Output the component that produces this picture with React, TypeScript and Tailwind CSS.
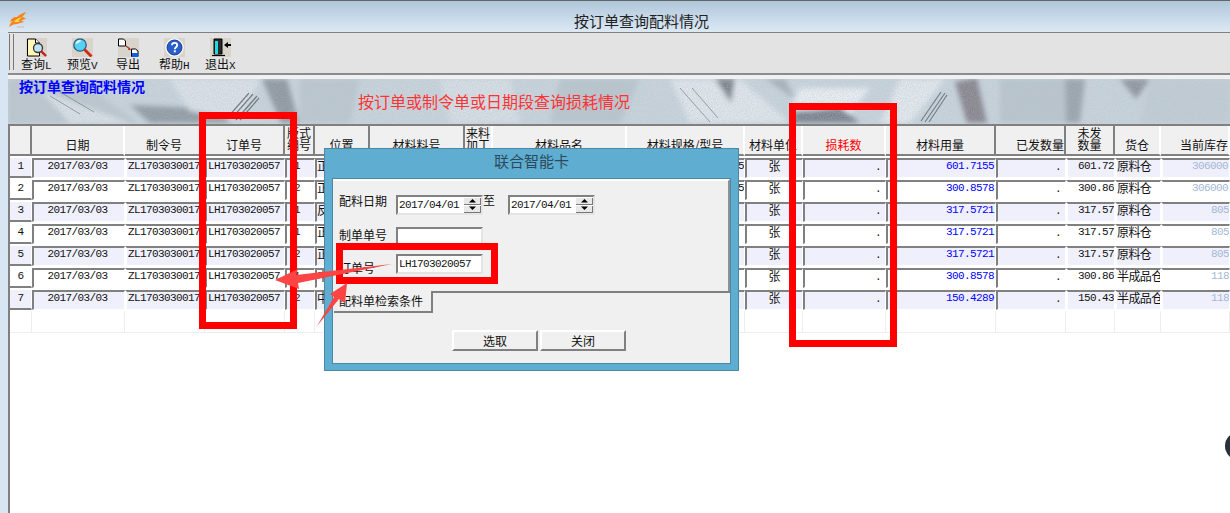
const COLS = "grid grid-cols-[22px_93px_80px_80px_30px_55px_95px_28px_134px_118px_58px_83px_110px_70px_49px_46px_69px]";
const MONO = "font-['Liberation_Mono',monospace] text-[11px] tracking-[-0.6px]";

type H = { t: string; t2?: string; dark?: boolean; align?: string; red?: boolean };
const headers: H[] = [
  { t: "" },
  { t: "日期", dark: true },
  { t: "制令号" },
  { t: "订单号" },
  { t: "版式", t2: "编号", dark: true },
  { t: "位置", dark: true },
  { t: "材料料号", dark: true },
  { t: "来料", t2: "加工", dark: true },
  { t: "材料品名" },
  { t: "材料规格/型号" },
  { t: "材料单位" },
  { t: "损耗数", red: true },
  { t: "材料用量" },
  { t: "已发数量", align: "justify-end", dark: true },
  { t: "未发", t2: "数量", dark: true },
  { t: "货仓", dark: true },
  { t: "当前库存", align: "justify-end" },
];

const rows = [
  { v: "1", p: "正", spec: "285", use: "601.7155", rest: "601.72", store: "原料仓", stock: "306000", wide: true },
  { v: "2", p: "正", spec: "285", use: "300.8578", rest: "300.86", store: "原料仓", stock: "306000", wide: true },
  { v: "1", p: "反", spec: "", use: "317.5721", rest: "317.57", store: "原料仓", stock: "8059.1", wide: false },
  { v: "1", p: "正", spec: "", use: "317.5721", rest: "317.57", store: "原料仓", stock: "8059.1", wide: false },
  { v: "2", p: "正", spec: "", use: "317.5721", rest: "317.57", store: "原料仓", stock: "8059.1", wide: false },
  { v: "1", p: "中", spec: "", use: "300.8578", rest: "300.86", store: "半成品仓", stock: "118", wide: false },
  { v: "2", p: "中", spec: "", use: "150.4289", rest: "150.43", store: "半成品仓", stock: "118", wide: false },
];

function Cell({ children, bg, dark, cls = "" }: { children?: React.ReactNode; bg: string; dark?: boolean; cls?: string }) {
  return (
    <div className={`h-[20px] flex overflow-hidden whitespace-nowrap leading-[12px] border-t-2 border-t-[#808080] border-b border-b-white border-r border-r-white border-l-2 ${dark ? "border-l-[#808080]" : "border-l-white"} ${bg} ${cls}`}>
      {children}
    </div>
  );
}

function Row({ i, r }: { i: number; r: (typeof rows)[number] }) {
  const bg = i % 2 === 0 ? "bg-[#f0f0fc]" : "bg-white";
  return (
    <div className={`${COLS} pt-px h-[22px]`}>
      <div className={`h-[20px] flex justify-center pt-[2px] leading-[12px] ${MONO} border-b-2 border-b-[#808080] border-r border-r-white ${bg}`}>{i + 1}</div>
      <Cell bg={bg} dark cls={`justify-center pr-[3px] ${MONO}`}>2017/03/03</Cell>
      <Cell bg={bg} cls={`pl-[1px] ${MONO}`}>ZL1703030017</Cell>
      <Cell bg={bg} dark cls={`pl-[1px] ${MONO}`}>LH1703020057</Cell>
      <Cell bg={bg} dark cls={`pl-[7px] ${MONO}`}>{r.v}</Cell>
      <Cell bg={bg} dark>{r.p}</Cell>
      <Cell bg={bg} />
      <Cell bg={bg} />
      <Cell bg={bg} />
      <Cell bg={bg} cls={`justify-end ${MONO}`}>{r.spec}</Cell>
      <Cell bg={bg} dark cls="justify-center">张</Cell>
      <Cell bg={bg} dark cls={`justify-end pr-[4px] pt-[1px] ${MONO}`}>.</Cell>
      <Cell bg={bg} dark cls={`justify-end pr-[1px] text-[#0000ff] ${MONO}`}>{r.use}</Cell>
      <Cell bg={bg} dark cls={`justify-end pr-[4px] pt-[1px] ${MONO}`}>.</Cell>
      <Cell bg={bg} cls={`justify-end ${MONO}`}>{r.rest}</Cell>
      <Cell bg={bg} cls="tracking-[-0.6px]">{r.store}</Cell>
      <Cell bg={bg} cls={`text-[#a3b8d6] ${MONO} ${r.wide ? "pl-[29px]" : "pl-[48px]"}`}>{r.stock}</Cell>
    </div>
  );
}

function Tile({ children }: { children: React.ReactNode }) {
  return <svg width="21" height="19" viewBox="0 0 21 19" className="block">{children}</svg>;
}

const tools: { label: string; key: string; icon: React.ReactNode }[] = [
  {
    label: "查询", key: "L", icon: (
      <Tile>
        <rect width="21" height="19" fill="#d8d4cc" />
        <path d="M1.5 1h8l4 4v13h-12z" fill="#fff7b8" stroke="#000" strokeWidth="1" />
        <path d="M9.5 1v4h4" fill="#fff" stroke="#000" />
        <circle cx="12" cy="10" r="4.5" fill="#bfe3f5" stroke="#333" strokeWidth="1.3" />
        <path d="M15 13l5 5" stroke="#c02020" strokeWidth="2.4" />
      </Tile>
    ),
  },
  {
    label: "预览", key: "V", icon: (
      <Tile>
        <rect width="21" height="19" fill="#d8d4cc" />
        <circle cx="8" cy="7" r="6.2" fill="#58d0f2" stroke="#2d5d7d" strokeWidth="1.3" />
        <path d="M4.5 5.5a4 4 0 0 1 4-2.5" stroke="#e8fbff" strokeWidth="2" fill="none" />
        <path d="M12.5 11.5l7 7" stroke="#d02a10" strokeWidth="2.8" />
      </Tile>
    ),
  },
  {
    label: "导出", key: "", icon: (
      <Tile>
        <rect width="21" height="19" fill="#d8d4cc" />
        <path d="M.5 1h5l2 2v5h-7z" fill="#fff" stroke="#000" />
        <path d="M8 8l4 3" stroke="#b03030" strokeWidth="1.2" />
        <path d="M11 9.5l2 2.5-3 0z" fill="#b03030" />
        <path d="M13.5 11h4l2.5 2v5.5h-6.5z" fill="#fff" stroke="#000" />
        <path d="M14 15h6v4h-6z" fill="#1060e0" />
      </Tile>
    ),
  },
  {
    label: "帮助", key: "H", icon: (
      <Tile>
        <rect width="21" height="19" fill="#d8d4cc" />
        <circle cx="10.5" cy="9.5" r="9.2" fill="#fff" />
        <circle cx="10.5" cy="9.5" r="7.5" fill="#2a5ec8" stroke="#1a3a90" />
        <path d="M8 7.2c0-3 5.2-3 5.2 0 0 2-2.4 2-2.4 4" stroke="#fff" strokeWidth="1.8" fill="none" />
        <rect x="9.8" y="12.3" width="2" height="2" fill="#fff" />
      </Tile>
    ),
  },
  {
    label: "退出", key: "X", icon: (
      <Tile>
        <rect width="21" height="19" fill="#d8d4cc" />
        <path d="M4 1h8v15H4z" fill="#2a2a2a" stroke="#000" />
        <path d="M5 3h3v13H5z" fill="#20d8e8" />
        <path d="M2 17.5h13" stroke="#000" strokeWidth="1.2" />
        <path d="M14 7l4-3v2h3v2h-3v2z" fill="#000" />
      </Tile>
    ),
  },
];

function Sunken({ w = "w-[87px]", children }: { w?: string; children?: React.ReactNode }) {
  return (
    <div className={`${w} h-[20px] bg-white flex items-center border-t-2 border-l-2 border-t-[#808080] border-l-[#808080] border-r-2 border-b-2 border-r-[#e4e4e4] border-b-[#e4e4e4] ${MONO}`}>
      {children}
    </div>
  );
}

function Spin() {
  return (
    <div className="w-[17px] ml-auto flex flex-col gap-px">
      {["M1 4.5h7L4.5 1z", "M1 .5h7L4.5 4z"].map((d) => (
        <div key={d} className="h-[7px] bg-[#e8e8e8] border-b border-r border-[#777] flex items-center justify-center">
          <svg width="9" height="5" viewBox="0 0 9 5"><path d={d} fill="#000" /></svg>
        </div>
      ))}
    </div>
  );
}

function DateBox() {
  return (
    <Sunken>
      <span className="pl-px">2017/04/01</span>
      <Spin />
    </Sunken>
  );
}

function Btn({ t }: { t: string }) {
  return (
    <div className="w-[86px] h-[21px] flex items-center justify-center bg-[#f0f0f0] border-t-2 border-l-2 border-t-white border-l-white border-r-2 border-b-2 border-r-[#808080] border-b-[#808080]">{t}</div>
  );
}

export default function App() {
  return (
    <div className="relative w-[1230px] h-[513px] overflow-hidden bg-white flex flex-col text-[12px] text-[#111] font-['Noto_Sans_CJK_SC',sans-serif]">
      {/* title bar */}
      <div className="h-[32px] shrink-0 flex items-center border-t border-t-[#666] bg-gradient-to-b from-[#afc6da] to-[#dde9f4]">
        <svg width="17" height="17" viewBox="0 0 17 17" className="ml-[9px] mt-[8px]">
          <path d="M0 15c1-3 2-5 4-6-1 0-2 0-3 1 1-3 3-5 7-5 2-2 5-4 9-5-1 2-3 4-4 5 2 0 3 1 4 2-2 0-4 1-5 2 1 0 2 0 3 1-3 1-5 1-7 2-3 0-5 1-8 3z" fill="#f5841f" />
          <path d="M5 10c2-3 5-4 8-5-2 2-3 3-4 4 1 0 1 0 2 1-2 0-4 0-6 0z" fill="#ffd84a" />
          <path d="M8 14h7v2H8z" fill="#cfcfcf" />
        </svg>
        <div className="ml-[548px] mt-[9px] text-[15px] leading-[16px] text-[#222]">按订单查询配料情况</div>
      </div>

      <div className="flex-1 flex min-h-0">
        <div className="w-[8px] bg-[#d8e6f4]" />
        <div className="flex-1 min-w-0 flex flex-col">
          {/* toolbar */}
          <div className="h-[43px] flex bg-[#e3e3e3] border-t border-t-[#808080] border-b-2 border-b-[#8c8c8c]">
            <div className="w-[5px] ml-px mt-px mb-[3px] border-l border-r border-[#777] bg-[#e3e3e3]" />
            <div className="flex ml-[-1px] pt-[5px]">
              {tools.map((b) => (
                <div key={b.label} className="w-[46px] flex flex-col items-center">
                  {b.icon}
                  <div className="h-[13px] leading-[13px] whitespace-nowrap">
                    {b.label}
                    {b.key && <span className="font-['Liberation_Mono',monospace] text-[11px] tracking-[-0.6px]">{b.key}</span>}
                  </div>
                </div>
              ))}
            </div>
          </div>
          <div className="h-[4px] bg-[#f0f0f0]" />

          {/* banner */}
          <div className="relative h-[45px] overflow-hidden bg-[#c9d5de]">
            <svg className="absolute inset-0" width="1222" height="45" viewBox="8 79 1222 45">
              <defs>
                <filter id="b" x="-20%" y="-50%" width="140%" height="200%"><feGaussianBlur stdDeviation="2.8" /></filter>
                <filter id="s"><feGaussianBlur stdDeviation="0.6" /></filter>
                <filter id="n" x="0" y="0" width="1" height="1">
                  <feTurbulence type="fractalNoise" baseFrequency="0.8" numOctaves="2" seed="4" />
                  <feColorMatrix values="0 0 0 0 0.45 0 0 0 0 0.5 0 0 0 0 0.55 0.5 0.5 0 0 -0.3" />
                </filter>
              </defs>
              <g filter="url(#b)">
                <path d="M8 79h70l60 44H8z" fill="#bcc8d0" />
                <path d="M40 90l90 33H70z" fill="#dbe3e9" />
                <path d="M130 105l90 4 10 14h-80z" fill="#8f99a2" />
                <path d="M170 79h90l-20 40-50-8z" fill="#dde5eb" />
                <path d="M262 79h25l12 44h-18z" fill="#8c959e" />
                <path d="M300 79h60l-10 44h-50z" fill="#bcc8d0" />
                <path d="M440 79h70l10 44h-70z" fill="#d8e1e8" />
                <path d="M560 79h80l-20 44h-70z" fill="#bac6cf" />
                <path d="M670 79h70l50 44H690z" fill="#e2e9ee" />
                <path d="M715 79h20l-4 24z" fill="#767e86" />
                <path d="M765 79h20l10 20z" fill="#a5afb7" />
                <path d="M800 88h70l-20 26-60-6z" fill="#edf2f5" />
                <path d="M795 112l45-5 20 16h-70z" fill="#767e89" />
                <path d="M900 79h45l-35 44h-30z" fill="#e6ecf0" />
                <path d="M955 82l22-4 10 45h-20z" fill="#848089" />
                <path d="M1000 79h70v44h-70z" fill="#bac6ce" />
                <path d="M1065 79h20l-5 44h-14z" fill="#98a2aa" />
                <path d="M1120 79h30l-14 20z" fill="#8a929a" />
                <path d="M1150 79h80v44h-90z" fill="#c2ced6" />
              </g>
              <g filter="url(#s)" stroke="#565d64" strokeWidth="1.2" opacity="0.85">
                <path d="M228 117l21-24M232 118l21-24M236 120l21-24M240 120l19-22" />
                <path d="M921 121l20-29M925 122l20-29M929 122l18-27" />
                <path d="M50 96l30 18M60 92l34 20" strokeWidth=".7" />
                <path d="M680 88l30 34M692 88l26 30" strokeWidth=".7" />
              </g>
              <rect x="8" y="79" width="1222" height="45" filter="url(#n)" />
            </svg>
            <div className="relative flex items-start h-full">
              <div className="pl-[11px] text-[14px] leading-[15px] font-bold text-[#0000ff]">按订单查询配料情况</div>
              <div className="ml-[213px] mt-[13px] text-[16px] leading-[18px] text-[#ff3333] whitespace-nowrap">按订单或制令单或日期段查询损耗情况</div>
            </div>
          </div>

          {/* table */}
          <div className="flex-1 border-l-2 border-l-[#808080]">
            <div className={`${COLS} h-[33px] border-t-2 border-t-[#808080]`}>
              {headers.map((h, i) => (
                <div
                  key={i}
                  className={`h-[30px] flex whitespace-nowrap bg-[#f0f0f0] border-b-2 border-b-[#808080] border-r-2 ${i < headers.length - 1 && headers[i + 1].dark ? "border-r-[#808080]" : "border-r-white"} ${h.t2 ? "flex-col items-center leading-[12px] pt-px" : `items-end pb-[2px] leading-[14px] ${h.align ?? "justify-center"}`} ${h.red ? "text-[#ff0000]" : ""}`}
                >
                  <span>{h.t}</span>
                  {h.t2 && <span>{h.t2}</span>}
                </div>
              ))}
            </div>
            {rows.map((r, i) => (
              <Row key={i} i={i} r={r} />
            ))}
            <div className={`${COLS} h-[22px] border-b border-b-[#eeeeee]`}>
              {headers.map((_, i) => (
                <div key={i} className="border-r border-r-[#eeeeee]" />
              ))}
            </div>
          </div>
        </div>
      </div>

      {/* dialog */}
      <div className="absolute left-[324px] top-[148px] w-[415px] h-[223px] bg-[#5fadd0] border border-[#4a88a4] flex flex-col">
        <div className="h-[29px] flex items-center justify-center text-[15px] text-[#2c4a5c] pb-[4px]">联合智能卡</div>
        <div className="mx-[7px] h-[186px] bg-[#f0f0f0] border border-[#4a88a4]">
          <div className="h-[112px] border-t-2 border-t-white border-r-2 border-r-[#909090] pl-[6px] pt-[14px] flex flex-col">
            <div className="flex items-center h-[20px]">
              <span className="w-[57px] mt-[-8px]">配料日期</span>
              <DateBox />
              <span className="w-[25px] mt-[-10px]">至</span>
              <DateBox />
            </div>
            <div className="flex items-center h-[20px] mt-[12px]">
              <span className="w-[57px] mt-[-4px]">制单单号</span>
              <Sunken />
            </div>
            <div className="flex items-center h-[20px] mt-[7px]">
              <span className="w-[57px] mt-[8px]">订单号</span>
              <Sunken><span className="pl-px">LH1703020057</span></Sunken>
            </div>
          </div>
          <div className="flex h-[22px]">
            <div className="w-[99px] ml-px flex items-center pl-[5px] whitespace-nowrap border-r-2 border-r-[#808080] border-b-2 border-b-[#808080]">配料单检索条件</div>
            <div className="flex-1 border-t-2 border-t-[#808080]" />
          </div>
          <div className="flex gap-[2px] ml-[119px] mt-[17px]">
            <Btn t="选取" />
            <Btn t="关闭" />
          </div>
        </div>
      </div>

      {/* annotations */}
      <div className="absolute left-[199px] top-[112px] w-[98px] h-[217px] border-[7px] border-[#ff0000]" />
      <div className="absolute left-[789px] top-[103px] w-[108px] h-[244px] border-[7px] border-[#ff0000]" />
      <div className="absolute left-[336px] top-[243px] w-[162px] h-[41px] border-[7px] border-[#ff0000]" />
      <svg className="absolute left-0 top-0 pointer-events-none" width="1230" height="513" viewBox="0 0 1230 513">
        <polygon points="275,280 298,269 296,275 392,264 298,283 299,289" fill="#ff4444" />
        <polygon points="317,326 334,297 330,294 347,283 345,303 339,299" fill="#ff4444" />
      </svg>
      <div className="absolute left-[1225px] top-[432px] w-[28px] h-[28px] rounded-full bg-[#2a303c]" />
    </div>
  );
}
